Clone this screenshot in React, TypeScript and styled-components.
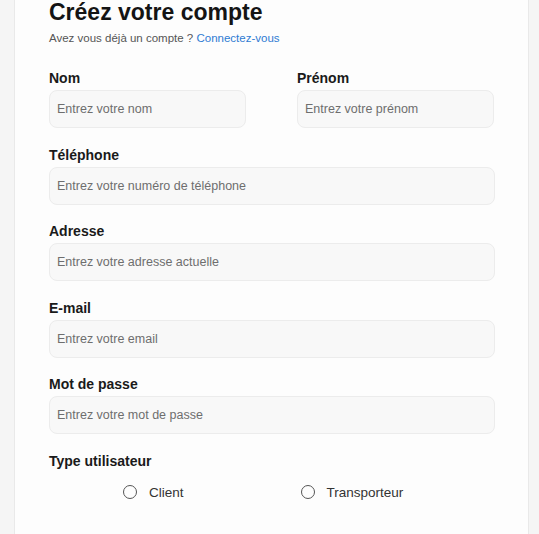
import React from "react";
import styled, { createGlobalStyle } from "styled-components";

const Global = createGlobalStyle`
  html, body { margin: 0; padding: 0; background: #f5f5f5; }
  body { font-family: "Liberation Sans", Arial, sans-serif; overflow: hidden; }
  * { box-sizing: border-box; }
`;

const Page = styled.div`
  padding: 0 10px 0 14px;
  height: 534px;
  overflow: hidden;
`;

const Card = styled.div`
  background: #fdfdfd;
  border: 1px solid #e9e9e9;
  border-top: none;
  width: 515px;
  min-height: 560px;
  padding: 0 33px 40px 34px;
`;

const Title = styled.h1`
  margin: -2px 0 0;
  font-size: 23px;
  line-height: 28px;
  font-weight: 700;
  color: #141414;
`;

const Subtitle = styled.p`
  margin: 5px 0 0;
  font-size: 11.5px;
  line-height: 14px;
  color: #555;
`;

const Link = styled.a`
  color: #2f7bd3;
  text-decoration: none;
`;

const Form = styled.div`
  display: flex;
  flex-direction: column;
  row-gap: 18.5px;
  margin-top: 25px;
`;

const Row = styled.div`
  display: grid;
  grid-template-columns: 197px 197px;
  column-gap: 51px;
`;

const Field = styled.label`
  display: flex;
  flex-direction: column;
  gap: 3px;
`;

const Label = styled.span`
  font-size: 14px;
  line-height: 17px;
  font-weight: 700;
  color: #1a1a1a;
`;

const Input = styled.input`
  height: 38px;
  width: 100%;
  border: 1px solid #ececec;
  border-radius: 8px;
  background: #f8f8f8;
  padding: 0 7px;
  font-family: "Liberation Sans", Arial, sans-serif;
  font-size: 12.5px;
  color: #222;
  outline: none;
  &::placeholder { color: #6e6e6e; }
`;

const RadioGroup = styled.div`
  display: flex;
  align-items: center;
  gap: 117px;
  padding-left: 74px;
  margin-top: 15px;
`;

const RadioOption = styled.label`
  display: flex;
  align-items: center;
  gap: 12px;
  font-size: 13.5px;
  color: #333;
`;

const RadioCircle = styled.span`
  width: 14px;
  height: 14px;
  border: 1.5px solid #555;
  border-radius: 50%;
  display: inline-block;
`;

const TypeBlock = styled.div`
  display: flex;
  flex-direction: column;
`;

export default function App() {
  return (
    <>
      <Global />
      <Page>
        <Card>
          <Title>Créez votre compte</Title>
          <Subtitle>
            Avez vous déjà un compte ? <Link href="#">Connectez-vous</Link>
          </Subtitle>
          <Form>
            <Row>
              <Field>
                <Label>Nom</Label>
                <Input placeholder="Entrez votre nom" />
              </Field>
              <Field>
                <Label>Prénom</Label>
                <Input placeholder="Entrez votre prénom" />
              </Field>
            </Row>
            <Field>
              <Label>Téléphone</Label>
              <Input placeholder="Entrez votre numéro de téléphone" />
            </Field>
            <Field>
              <Label>Adresse</Label>
              <Input placeholder="Entrez votre adresse actuelle" />
            </Field>
            <Field>
              <Label>E-mail</Label>
              <Input placeholder="Entrez votre email" />
            </Field>
            <Field>
              <Label>Mot de passe</Label>
              <Input type="password" placeholder="Entrez votre mot de passe" />
            </Field>
            <TypeBlock>
              <Label>Type utilisateur</Label>
              <RadioGroup>
                <RadioOption>
                  <RadioCircle />
                  Client
                </RadioOption>
                <RadioOption>
                  <RadioCircle />
                  Transporteur
                </RadioOption>
              </RadioGroup>
            </TypeBlock>
          </Form>
        </Card>
      </Page>
    </>
  );
}
